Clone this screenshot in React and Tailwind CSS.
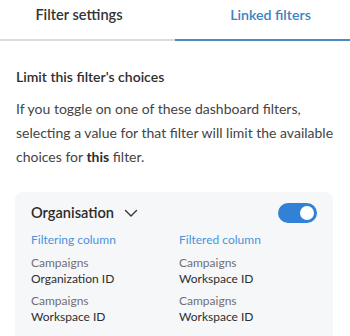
import React from "react";

function Pair({ a, b }) {
  return (
    <div className="flex flex-col leading-[16px] text-[12px]">
      <span className="text-[#707070]">{a}</span>
      <span className="text-[#2e2e2e]">{b}</span>
    </div>
  );
}

export default function App() {
  return (
    <div className="w-[350px] h-[336px] overflow-hidden bg-white font-['Lato',sans-serif]">
      <div className="flex">
        <div className="w-[175px] h-[41px] flex justify-center pt-[5px] pr-[17px] border-b-2 border-[#dcdcdc] text-[14.6px] leading-[20px] font-semibold text-[#333]">
          Filter settings
        </div>
        <div className="w-[175px] h-[41px] flex justify-center pt-[5px] pl-[16px] border-b-2 border-[#4a8bc2] text-[14.2px] leading-[20px] font-semibold text-[#3a83c1]">
          Linked filters
        </div>
      </div>
      <div className="px-4 pt-[26px]">
        <div className="text-[14px] font-semibold text-[#2e2e2e] leading-[20px]">Limit this filter's choices</div>
        <p className="mt-[10px] text-[14px] leading-[24px] text-[#444]">
          If you toggle on one of these dashboard filters, selecting a value for that filter will limit the available choices for <span className="font-bold text-[#2e2e2e]">this</span> filter.
        </p>
      </div>
      <div className="mx-[15px] mt-[23px] w-[318px] rounded-lg bg-[#f6f7f9] pl-4 pr-4 pt-[11px] pb-4">
        <div className="flex items-center justify-between h-[20px]">
          <div className="flex items-center gap-[10px]">
            <span className="text-[14.6px] leading-[20px] font-semibold text-[#2b2b2b]">Organisation</span>
            <svg width="14" height="9" viewBox="0 0 14 9" fill="none" stroke="#333" strokeWidth="1.4" strokeLinecap="round" strokeLinejoin="round">
              <path d="M1.5 1.5 L7 7 L12.5 1.5" />
            </svg>
          </div>
          <div className="w-[39px] h-[20px] rounded-full bg-[#3182d6] flex items-center justify-end pr-[3px]">
            <div className="w-[14px] h-[14px] rounded-full bg-white" />
          </div>
        </div>
        <div className="grid grid-cols-[148px_1fr] mt-[9px] gap-y-[6px]">
          <div className="text-[12px] text-[#4a93dd] leading-[16px] mb-[1px]">Filtering column</div>
          <div className="text-[12px] text-[#4a93dd] leading-[16px] mb-[1px]">Filtered column</div>
          <Pair a="Campaigns" b="Organization ID" />
          <Pair a="Campaigns" b="Workspace ID" />
          <Pair a="Campaigns" b="Workspace ID" />
          <Pair a="Campaigns" b="Workspace ID" />
        </div>
      </div>
    </div>
  );
}
